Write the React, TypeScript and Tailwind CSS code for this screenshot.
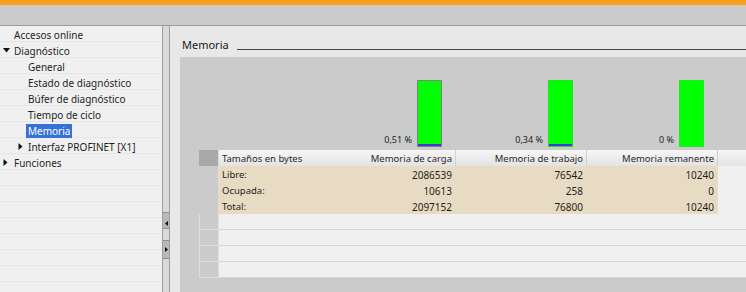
import React from "react";

const font = { fontFamily: '"Noto Sans", "Liberation Sans", sans-serif' };

function Tri({ dir }: { dir: "down" | "right" }) {
  if (dir === "down")
    return (
      <svg width="7" height="5" viewBox="0 0 7 5" className="shrink-0">
        <path d="M0 0 H7 L3.5 4.5 Z" fill="#111" />
      </svg>
    );
  return (
    <svg width="5" height="7" viewBox="0 0 5 7" className="shrink-0">
      <path d="M0.5 0 V7 L4.5 3.5 Z" fill="#111" />
    </svg>
  );
}

type TreeItem = { label: string; indent: number; arrow?: "down" | "right"; selected?: boolean };

const tree: TreeItem[] = [
  { label: "Accesos online", indent: 0 },
  { label: "Diagnóstico", indent: 0, arrow: "down" },
  { label: "General", indent: 1 },
  { label: "Estado de diagnóstico", indent: 1 },
  { label: "Búfer de diagnóstico", indent: 1 },
  { label: "Tiempo de ciclo", indent: 1 },
  { label: "Memoria", indent: 1, selected: true },
  { label: "Interfaz PROFINET [X1]", indent: 1, arrow: "right" },
  { label: "Funciones", indent: 0, arrow: "right" },
];

const cols = "grid grid-cols-[20px_106px_131px_131px_131px_1fr]";

const rows = [
  ["Libre:", "2086539", "76542", "10240"],
  ["Ocupada:", "10613", "258", "0"],
  ["Total:", "2097152", "76800", "10240"],
];

function Bar({ label, border, used }: { label: string; border: string; used: boolean }) {
  return (
    <div className="flex items-end justify-end gap-[5px] pr-[14px]">
      <span className="text-[9px] leading-none text-[#222] mb-[3px] whitespace-nowrap">{label}</span>
      <div className={`w-[25px] h-[67px] bg-[#00ff00] border flex flex-col justify-end ${border}`}>
        {used ? <div className="h-[2px] bg-[#3b3bdc]" /> : null}
      </div>
    </div>
  );
}

const hdr = "bg-gradient-to-b from-[#f6f6f6] to-[#e3e3e3] border-b border-[#d0d0d0] flex items-center pt-[2px] text-[#2a2a2a]";
const cell = "bg-[#e8dbc3] border-b border-[#efe6d6] flex items-center pt-[2px]";

export default function App() {
  return (
    <div className="w-[746px] h-[292px] flex flex-col overflow-hidden bg-[#e8e8e8] text-[#1e1e1e]" style={font}>
      <div className="h-[5px] bg-[#f8a01c]" />
      <div className="h-[21px] bg-[#cbcbcb] border-b border-[#9c9c9c]" />
      <div className="flex-1 flex min-h-0">
        {/* tree */}
        <div className="w-[162px] bg-[#f0f0f0] flex flex-col text-[10px]">
          {tree.map((t, i) => (
            <div key={i} className="h-[16px] shrink-0 border-b border-[#e6e6e6] flex items-center pt-[2px]">
              <div className={t.indent ? "w-[28px] shrink-0 flex items-center pl-[18px]" : "w-[14px] shrink-0 flex items-center pl-[3px]"}>
                {t.arrow ? <Tri dir={t.arrow} /> : null}
              </div>
              {t.selected ? (
                <span className="-ml-[2px] px-[2px] h-[14px] leading-[14px] bg-[#3571d6] text-white">{t.label}</span>
              ) : (
                <span className="leading-[14px] whitespace-nowrap">{t.label}</span>
              )}
            </div>
          ))}
          {Array.from({ length: 8 }).map((_, i) => (
            <div key={"e" + i} className="h-[16px] shrink-0 border-b border-[#e6e6e6]" />
          ))}
        </div>
        {/* splitter */}
        <div className="w-[8px] bg-[#d9d9d9] border-l border-r border-[#9e9e9e] flex flex-col">
          <div className="h-[186px] shrink-0" />
          <div className="h-[17px] shrink-0 bg-[#b9b9b9] border-t border-b border-[#8e8e8e] flex items-end justify-center pb-[2px]">
            <svg width="3" height="5" viewBox="0 0 3 5"><path d="M3 0 V5 L0 2.5 Z" fill="#111" /></svg>
          </div>
          <div className="h-[11px] shrink-0" />
          <div className="h-[19px] shrink-0 bg-[#b9b9b9] border-t border-b border-[#8e8e8e] flex items-center justify-center">
            <svg width="3" height="5" viewBox="0 0 3 5"><path d="M0 0 V5 L3 2.5 Z" fill="#111" /></svg>
          </div>
        </div>
        {/* content */}
        <div className="flex-1 flex flex-col bg-[#e8e8e8] min-w-0">
          <div className="h-[26px] shrink-0 flex items-end pl-[12px]">
            <span className="text-[11px] leading-[14px] text-[#1a1a1a]">Memoria</span>
            <div className="flex-1 h-px bg-[#454545] ml-[8px] mb-[2px]" />
          </div>
          <div className="h-[5px] shrink-0" />
          <div className="flex-1 ml-[10px] bg-[#cbcbcb] pl-[19px] pt-[23px]">
            <div className={`${cols} h-[67px] mb-[3px]`}>
              <div />
              <div />
              <Bar label="0,51 %" border="border-[#808080]" used />
              <Bar label="0,34 %" border="border-[#22e022]" used />
              <Bar label="0 %" border="border-[#22e822]" used={false} />
              <div />
            </div>
            <div className="text-[9.5px]">
              {/* header */}
              <div className={`${cols} h-[16px]`}>
                <div className="bg-[#a9a9a9] border-r border-[#d8d8d8]" />
                <div className={`${hdr} pl-[3px]`}>Tamaños en bytes</div>
                <div className={`${hdr} border-r justify-end pr-[3px]`}>Memoria de carga</div>
                <div className={`${hdr} border-r justify-end pr-[3px]`}>Memoria de trabajo</div>
                <div className={`${hdr} border-r justify-end pr-[3px]`}>Memoria remanente</div>
                <div className="bg-gradient-to-b from-[#f6f6f6] to-[#e3e3e3] border-b border-[#d0d0d0]" />
              </div>
              {rows.map((r, i) => (
                <div key={i} className={`${cols} h-[16px]`}>
                  <div className="bg-[#cbcbcb] border-r border-b border-[#dddddd]" />
                  <div className={`${cell} pl-[3px]`}>{r[0]}</div>
                  <div className={`${cell} justify-end pr-[4px] text-[10px]`}>{r[1]}</div>
                  <div className={`${cell} justify-end pr-[4px] text-[10px]`}>{r[2]}</div>
                  <div className={`${cell} justify-end pr-[4px] text-[10px]`}>{r[3]}</div>
                  <div className="bg-[#f0f0f0] border-b border-[#dcdcdc]" />
                </div>
              ))}
              {Array.from({ length: 4 }).map((_, i) => (
                <div key={"r" + i} className="grid grid-cols-[20px_1fr] h-[16px]">
                  <div className="bg-[#cbcbcb] border border-t-0 border-[#dddddd]" />
                  <div className="bg-[#f0f0f0] border-b border-[#d6d6d6]" />
                </div>
              ))}
            </div>
          </div>
        </div>
      </div>
    </div>
  );
}
